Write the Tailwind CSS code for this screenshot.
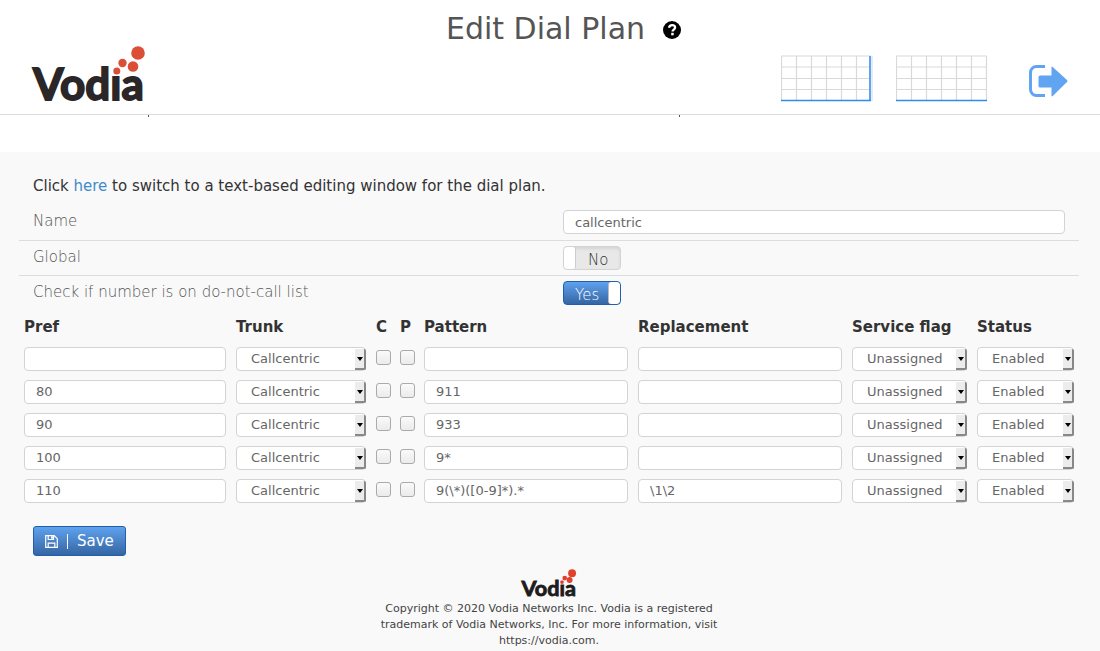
<!DOCTYPE html>
<html lang="en">
<head>
    <meta charset="UTF-8">
    <meta name="viewport" content="width=device-width, initial-scale=1.0">
    <title>Edit Dial Plan</title>
    <script src="https://cdn.jsdelivr.net/npm/@tailwindcss/browser@4"></script>
</head>
<body class="bg-white min-h-screen flex flex-col font-['DejaVu_Sans',sans-serif] text-[#333]">
    <header class="relative h-[115px] shrink-0 grid grid-cols-[1fr_auto_1fr] items-end px-8 pb-3 bg-white border-b border-[#ddd]">
        <a href="#" aria-label="Vodia">
            <svg class="block w-[114px] h-[58px] overflow-visible" viewBox="0 0 114 58">
                <text x="1" y="56" font-family="Lato" font-weight="700" font-size="44" fill="#2b2728" stroke="#2b2728" stroke-width="1.800">Vodıa</text>
                <g fill="#dc4f37">
                    <circle cx="106" cy="9" r="6.800"/>
                    <circle cx="101" cy="22.500" r="5.300"/>
                    <circle cx="90.500" cy="19" r="4.200"/>
                    <circle cx="84.800" cy="27" r="3.500"/>
                </g>
            </svg>
        </a>

        <div class="self-start flex items-center gap-[18px] pt-2 pl-[27px]">
            <h1 class="text-[30px] leading-[42px] text-[#555]">Edit Dial Plan</h1>
            <button type="button" aria-label="Help" class="pt-0.5">
                <svg class="block w-[18px] h-[18px]" viewBox="0 0 18 18">
                    <circle cx="9" cy="9" r="9" fill="#000"/>
                    <path d="M6 6.800C6.300 4.900 7.500 4.200 9.100 4.200c1.700 0 3 .9 3 2.400 0 2-2.500 2-2.500 3.900" fill="none" stroke="#fff" stroke-width="2.300"/>
                    <rect x="8.200" y="11.800" width="2.500" height="2.500" fill="#fff"/>
                </svg>
            </button>
        </div>

        <div class="flex items-end justify-end">
            <svg class="w-[92px] h-[47px]" viewBox="0 0 92 47">
                <path d="M.5 1v45M15.500 1v45M30.500 1v45M45.500 1v45M60.500 1v45M75.500 1v45M0 1h90M0 12h90M0 23.500h90M0 34.500h90" stroke="#d9d9d9" stroke-width="1.200" fill="none"/>
                <path d="M89 1v45" stroke="#5fa4f2" stroke-width="2"/>
                <path d="M91 1v45" stroke="#ccd9e8"/>
                <path d="M0 45.500h90" stroke="#2f8ceb" stroke-width="1.500"/>
            </svg>
            <svg class="ml-[23px] w-[92px] h-[47px]" viewBox="0 0 92 47">
                <path d="M.5 1v45M15.500 1v45M30.500 1v45M45.500 1v45M60.500 1v45M75.500 1v45M90.500 1v45M0 1h91M0 12h91M0 23.500h91M0 34.500h91" stroke="#d9d9d9" stroke-width="1.200" fill="none"/>
                <path d="M0 45.500h91" stroke="#2f8ceb" stroke-width="1.500"/>
            </svg>
            <a href="#" aria-label="Log out" class="ml-[41px] mb-1">
                <svg class="block w-[39px] h-[34px]" viewBox="0 0 39 34">
                    <path d="M16 2.500H7.500a6 6 0 0 0-6 6v17a6 6 0 0 0 6 6H16" fill="none" stroke="#60a4f2" stroke-width="3"/>
                    <path d="M11 11.500h11.500V3.500q0-1.500 1.200-.5L38 16q1 1 0 2L23.700 32q-1.200 1-1.200-.5v-8H11q-1.500 0-1.500-1.500v-9q0-1.500 1.500-1.500z" fill="#60a4f2"/>
                </svg>
            </a>
        </div>
    </header>

    <!-- strip of page scrolled under the header -->
    <div class="relative h-[37px] shrink-0">
        <span class="absolute top-0 left-[148px] w-px h-[2px] bg-[#555]"></span>
        <span class="absolute top-0 left-[679px] w-px h-[2px] bg-[#555]"></span>
    </div>

    <main class="grow bg-[#f9f9f9] pl-[19px] pr-[21px] pt-6">
        <form>
            <p class="px-[14px] text-[15px] leading-5 pb-[9px]">Click <a href="#" class="text-[#428bca]">here</a> to switch to a text-based editing window for the dial plan.</p>

            <div class="grid grid-cols-2 h-[36px] border-b border-[#ddd]">
                <label for="name" class="px-[14px] pt-[6px] text-[15px] leading-5 font-extralight text-[#555]">Name</label>
                <div class="px-[14px] pt-[5px]">
                    <input id="name" type="text" value="callcentric" class="block w-full h-6 px-[11px] rounded-[4px] border border-[#d3d3d3] bg-white text-[13px] text-[#666]">
                </div>
            </div>
            <div class="grid grid-cols-2 h-[35px] border-b border-[#ddd]">
                <label for="global" class="px-[14px] pt-[6px] text-[15px] leading-5 font-extralight text-[#555]">Global</label>
                <div class="px-[14px] pt-[5px]">
                    <div class="relative w-[58px] h-6 rounded-[4px] border border-[#d3d3d3] bg-[#e8e8e8] shadow-[inset_0_2px_3px_#d4d4d4] overflow-hidden">
                        <input id="global" type="checkbox" class="absolute inset-0 w-full h-full opacity-0">
                        <span class="absolute left-0 inset-y-0 w-[12px] rounded-[3px] bg-white border-r border-[#ccc]"></span>
                        <span class="absolute left-[24px] top-[3px] text-[15px] leading-5 font-extralight text-[#333]">No</span>
                    </div>
                </div>
            </div>
            <div class="grid grid-cols-2 h-[36px]">
                <label for="dnc" class="px-[14px] pt-[6px] text-[15px] leading-5 font-extralight text-[#555]">Check if number is on do-not-call list</label>
                <div class="px-[14px] pt-[5px]">
                    <div class="relative w-[58px] h-6 rounded-[4px] border border-[#1f5fae] bg-linear-to-b from-[#5fa2ee] to-[#3566a3] overflow-hidden">
                        <input id="dnc" type="checkbox" checked class="absolute inset-0 w-full h-full opacity-0">
                        <span class="absolute left-[11px] top-[3px] text-[15px] leading-5 font-extralight text-white">Yes</span>
                        <span class="absolute right-0 inset-y-0 w-[12px] rounded-[3px] bg-white border-l border-[#bbb]"></span>
                    </div>
                </div>
            </div>

            <table class="w-full table-fixed text-left">
                <thead>
                    <tr class="h-[30px] text-[15px] leading-5">
                        <th class="px-[5px] w-[20%]">Pref</th>
                        <th class="px-[5px] w-[140px]">Trunk</th>
                        <th class="px-[5px] w-[24px]">C</th>
                        <th class="px-[5px] w-[24px]">P</th>
                        <th class="px-[5px]">Pattern</th>
                        <th class="px-[5px]">Replacement</th>
                        <th class="px-[5px] w-[125px] whitespace-nowrap">Service flag</th>
                        <th class="px-[5px] w-[107px]">Status</th>
                    </tr>
                </thead>
                <tbody id="rows"></tbody>
            </table>

            <div class="px-[14px] pt-[19px]">
                <button type="submit" class="flex items-center h-[30px] px-[11px] rounded-[3px] border border-[#1f5fae] bg-linear-to-b from-[#5fa2ee] to-[#3566a3] text-white text-[15px] leading-5">
                    <svg class="w-[13px] h-[13px] mr-[9px]" viewBox="0 0 13 13" fill="none" stroke="#fff" stroke-width="1.200">
                        <path d="M.7.7h8.600l3 3v8.600H.7zM3.200 12V8.200h6.600V12M3.200.9v3.600h5.400V.9"/>
                        <path d="M7 1.200v2.600" stroke-width="1.800"/>
                    </svg>
                    <span class="w-px h-[15px] mr-[9px] bg-white"></span>
                    Save
                </button>
            </div>
        </form>

        <footer class="pt-[13px] pb-[3px] flex flex-col items-center text-center text-[#444]">
            <svg class="w-[56px] h-[29px] overflow-visible" viewBox="0 0 114 58" role="img" aria-label="Vodia">
                <text x="1" y="55" font-family="Lato" font-weight="700" font-size="44" fill="#1f1b1c" stroke="#1f1b1c" stroke-width="1.800">Vodıa</text>
                <g fill="#e0402c">
                    <circle cx="104" cy="8" r="8"/>
                    <circle cx="99" cy="22" r="6"/>
                    <circle cx="89" cy="18" r="4.800"/>
                    <circle cx="83.500" cy="26" r="3.800"/>
                </g>
            </svg>
            <p class="mt-[3px] w-[345px] text-[11px] leading-4">Copyright © 2020 Vodia Networks Inc. Vodia is a registered trademark of Vodia Networks, Inc. For more information, visit https://vodia.com.</p>
        </footer>
    </main>

    <script>
        const rules = [
            { pref: '', pattern: '', replacement: '' },
            { pref: '80', pattern: '911', replacement: '' },
            { pref: '90', pattern: '933', replacement: '' },
            { pref: '100', pattern: '9*', replacement: '' },
            { pref: '110', pattern: '9(\\*)([0-9]*).*', replacement: '\\1\\2' },
        ];

        function textCell(label, value) {
            return `<td class="px-[5px]"><input type="text" aria-label="${label}" value="${value}" class="block w-full h-6 px-[11px] rounded-[4px] border border-[#d3d3d3] bg-white text-[13px] text-[#666]"></td>`;
        }

        function selectCell(label, value) {
            return `<td class="px-[5px]">
                <div class="relative">
                    <select aria-label="${label}" class="block appearance-none w-full h-6 pl-[14px] rounded-[4px] border border-[#d3d3d3] bg-white text-[13px] text-[#666]"><option>${value}</option></select>
                    <span class="absolute right-0 top-[2px] w-[11px] h-[21px] rounded-r-[2px] border-r-2 border-b-2 border-[#888] bg-[#ececec] pointer-events-none">
                        <svg class="block mt-[8px] ml-[2px] w-[6px] h-[4px]" viewBox="0 0 6 4"><path d="M0 0h6L3 4z"/></svg>
                    </span>
                </div>
            </td>`;
        }

        function checkCell(label) {
            return `<td class="px-[5px]"><input type="checkbox" aria-label="${label}" class="block appearance-none w-[15px] h-[15px] -mt-0.5 rounded-[3px] border border-[#aaa] bg-linear-to-b from-[#fafafa] to-[#ebebeb]"></td>`;
        }

        document.getElementById('rows').innerHTML = rules.map(r => `<tr class="h-[33px]">
            ${textCell('Pref', r.pref)}
            ${selectCell('Trunk', 'Callcentric')}
            ${checkCell('C')}
            ${checkCell('P')}
            ${textCell('Pattern', r.pattern)}
            ${textCell('Replacement', r.replacement)}
            ${selectCell('Service flag', 'Unassigned')}
            ${selectCell('Status', 'Enabled')}
        </tr>`).join('');
    </script>
</body>
</html>
